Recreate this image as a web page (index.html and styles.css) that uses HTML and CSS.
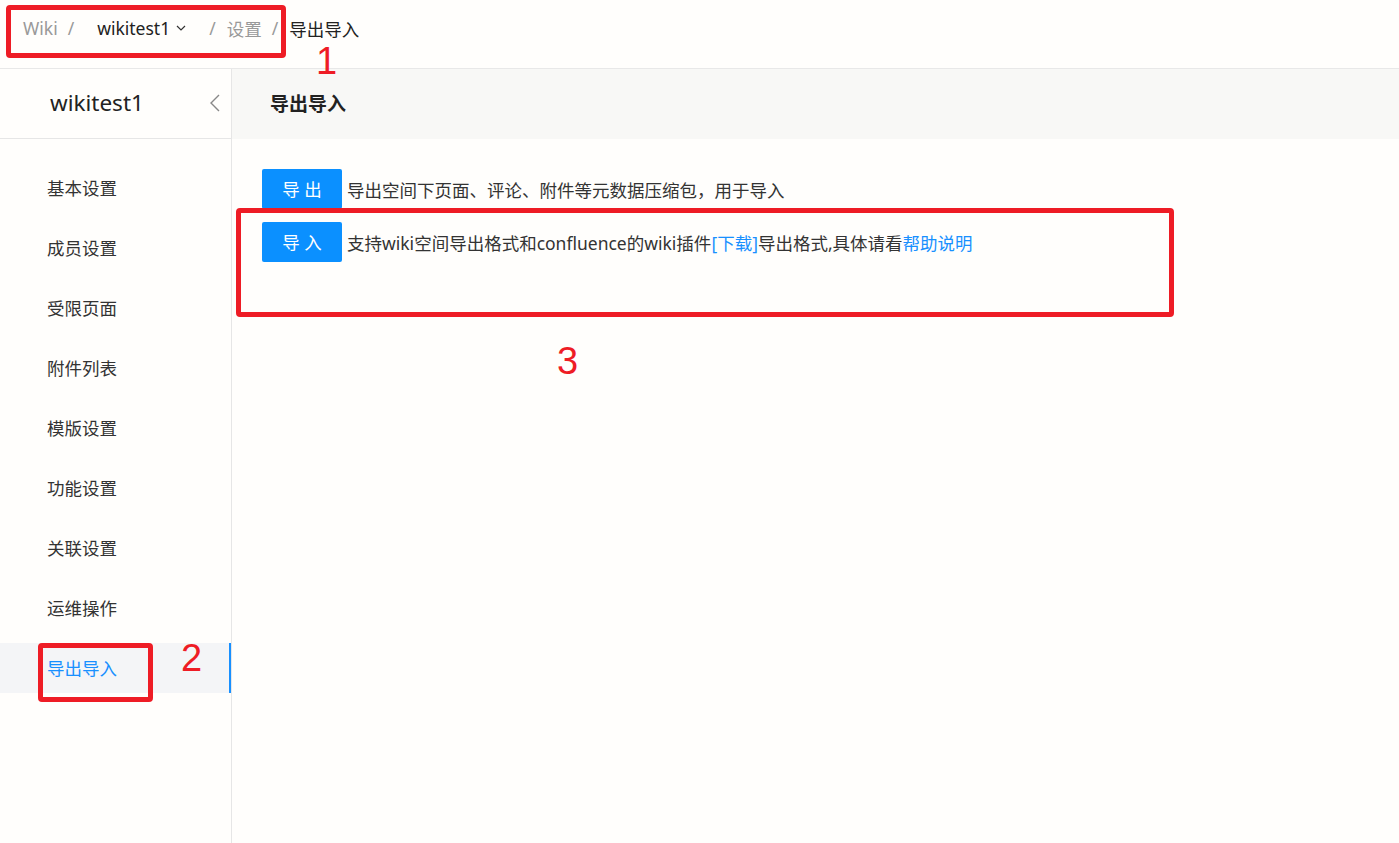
FILE: index.html
```html
<!DOCTYPE html>
<html lang="zh-CN">
  <head>
    <meta charset="UTF-8" />
    <meta name="viewport" content="width=device-width, initial-scale=1.0" />
    <title>导出导入</title>
    <link rel="stylesheet" href="styles.css">
  </head>
  <body>
    <div class="topbar">
      <span class="crumb muted">Wiki</span>
      <span class="sep">/</span>
      <span class="crumb space">wikitest1
        <svg class="caret" viewBox="0 0 12 12" width="12" height="12"><path d="M2 4l4 4 4-4" fill="none" stroke="#333" stroke-width="1.2"/></svg>
      </span>
      <span class="sep">/</span>
      <span class="crumb muted">设置</span>
      <span class="sep">/</span>
      <span class="crumb">导出导入</span>
    </div>
    <div class="layout">
      <div class="sidebar">
        <div class="side-head">
          <span class="side-title">wikitest1</span>
          <svg class="collapse" viewBox="0 0 12 20" width="12" height="20"><path d="M10 2L2 10l8 8" fill="none" stroke="#888" stroke-width="1.4"/></svg>
        </div>
        <div class="menu">
          <div class="menu-item">基本设置</div>
          <div class="menu-item">成员设置</div>
          <div class="menu-item">受限页面</div>
          <div class="menu-item">附件列表</div>
          <div class="menu-item">模版设置</div>
          <div class="menu-item">功能设置</div>
          <div class="menu-item">关联设置</div>
          <div class="menu-item">运维操作</div>
          <div class="menu-item active">导出导入</div>
        </div>
      </div>
      <div class="main">
        <div class="main-head">导出导入</div>
        <div class="main-body">
          <div class="row">
            <div class="btn">导 出</div>
            <span class="desc">导出空间下页面、评论、附件等元数据压缩包，用于导入</span>
          </div>
          <div class="row">
            <div class="btn">导 入</div>
            <span class="desc">支持wiki空间导出格式和confluence的wiki插件<a class="link">[下载]</a>导出格式,具体请看<a class="link">帮助说明</a></span>
          </div>
        </div>
      </div>
    </div>

    <!-- annotation marks -->
    <div class="mark box1"></div>
    <div class="mark-num num1">1</div>
    <div class="mark box2"></div>
    <div class="mark-num num2">2</div>
    <div class="mark box3"></div>
    <div class="mark-num num3">3</div>
  </body>
</html>
```

FILE: styles.css
```css
* {
  padding: 0;
  margin: 0;
  box-sizing: border-box;
}
body {
  width: 1399px;
  height: 843px;
  overflow: hidden;
  background: #fffefc;
  font-family: 'Noto Sans', 'Noto Sans CJK SC', sans-serif;
  font-size: 17.5px;
  color: #333;
  position: relative;
}
.topbar {
  height: 69px;
  display: flex;
  align-items: center;
  padding: 0 0 12px 23px;
  border-bottom: 1px solid #e8e8e8;
}
.crumb {
  color: #222;
}
.crumb.muted {
  color: #999;
}
.crumb.space {
  margin-left: 12px;
  margin-right: 12px;
  display: inline-flex;
  align-items: center;
}
.caret {
  margin-left: 5px;
}
.sep {
  color: #999;
  margin: 0 11px 0 10px;
}
.layout {
  display: flex;
  height: 774px;
}
.sidebar {
  width: 232px;
  border-right: 1px solid #e6e6e6;
}
.side-head {
  height: 70px;
  border-bottom: 1px solid #e6e6e6;
  display: flex;
  align-items: center;
  justify-content: space-between;
  padding: 0 10px 2px 50px;
}
.side-title {
  font-size: 22.5px;
  color: #222;
}
.menu {
  padding-top: 24px;
}
.menu-item {
  height: 50px;
  line-height: 50px;
  margin-bottom: 10px;
  padding-left: 47px;
  color: #333;
}
.menu-item.active {
  color: #1890ff;
  background: #f4f5f7;
  border-right: 2px solid #1890ff;
}
.main {
  flex: 1;
}
.main-head {
  height: 70px;
  background: #f8f8f6;
  padding-left: 38px;
  line-height: 70px;
  font-size: 19px;
  font-weight: bold;
  color: #222;
}
.main-body {
  padding: 30px 0 0 30px;
}
.row {
  display: flex;
  align-items: center;
  margin-bottom: 13px;
}
.btn {
  width: 80px;
  height: 40px;
  line-height: 40px;
  text-align: center;
  background: #0b90ff;
  color: #fff;
  border-radius: 2px;
}
.desc {
  margin-left: 5px;
  color: #333;
}
.link {
  color: #1890ff;
}
.mark {
  position: absolute;
  border: 5px solid #ee1c25;
  border-radius: 4px;
}
.box1 {
  left: 6px;
  top: 5px;
  width: 280px;
  height: 53px;
}
.box2 {
  left: 38px;
  top: 643px;
  width: 115px;
  height: 59px;
}
.box3 {
  left: 236px;
  top: 208px;
  width: 938px;
  height: 109px;
}
.mark-num {
  position: absolute;
  color: #ee1c25;
  font-family: 'Liberation Sans', sans-serif;
  font-size: 38px;
  line-height: 1;
}
.num1 {
  left: 316px;
  top: 42px;
}
.num2 {
  left: 181px;
  top: 639px;
}
.num3 {
  left: 557px;
  top: 342px;
}
```
